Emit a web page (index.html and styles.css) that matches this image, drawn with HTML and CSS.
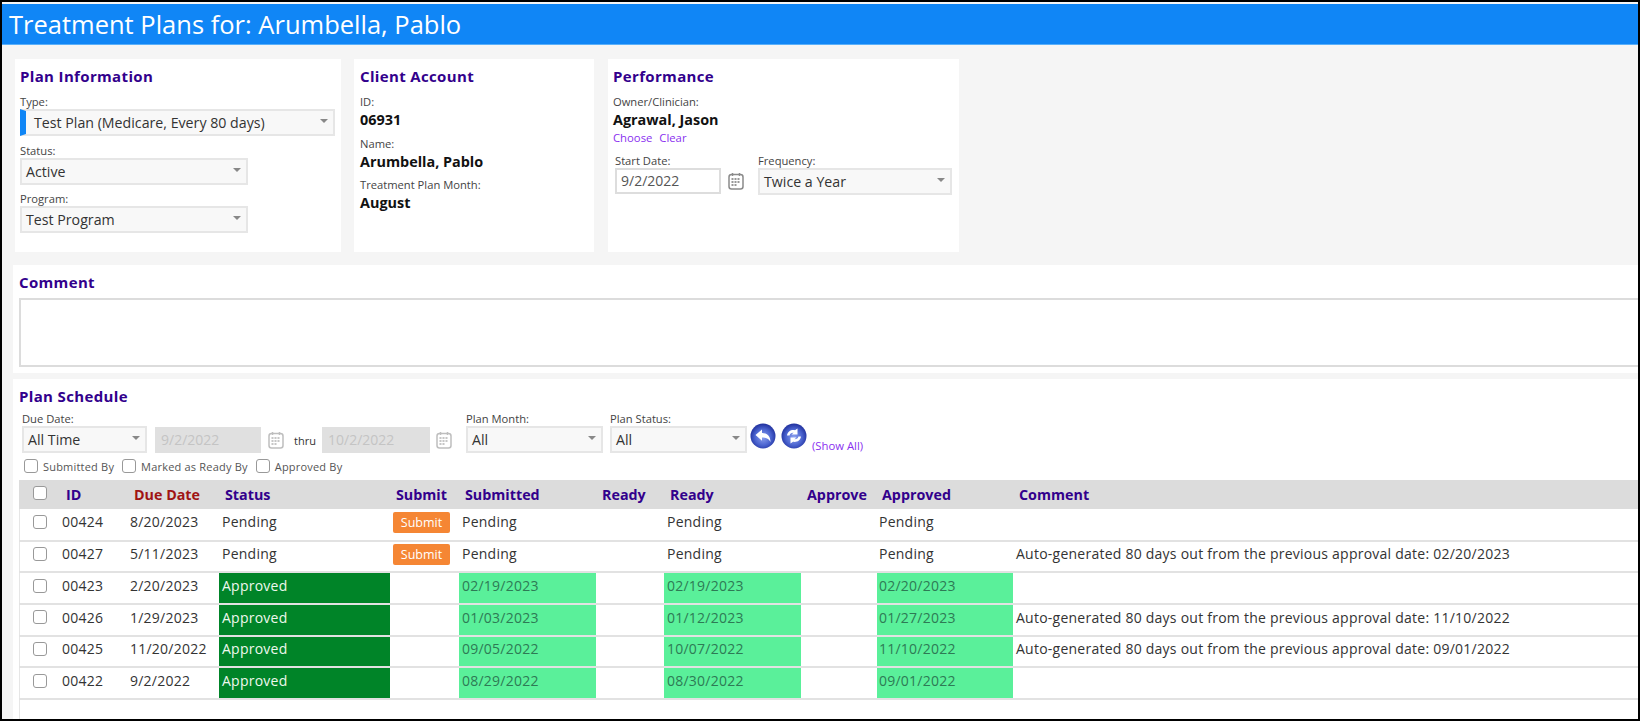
FILE: index.html
```html
<!DOCTYPE html>
<html lang="en">
<head>
  <meta charset="UTF-8">
  <title>Treatment Plans for: Arumbella, Pablo</title>
  <link rel="stylesheet" href="styles.css">
</head>
<body>
  <svg class="icon-defs" width="0" height="0">
    <defs>
      <radialGradient id="ballBlue" cx="50%" cy="55%" r="55%">
        <stop offset="0" stop-color="#8ea2f0"/>
        <stop offset="0.6" stop-color="#4a63cf"/>
        <stop offset="1" stop-color="#1f2f9c"/>
      </radialGradient>
      <symbol id="calendar" viewBox="0 0 16 18">
        <rect x="1" y="2.5" width="14" height="14.5" rx="2.5" fill="#fff" stroke="#8a8a8a" stroke-width="1.5"/>
        <path d="M4.5 1v3M11.5 1v3" stroke="#8a8a8a" stroke-width="1.5"/>
        <path d="M3.5 7h9M3.5 10h9M3.5 13h6" stroke="#777" stroke-width="1.6" stroke-dasharray="2 1"/>
      </symbol>
    </defs>
  </svg>

  <div class="frame">
    <div class="page-header">Treatment Plans for: Arumbella, Pablo</div>

    <div class="cards">
      <div class="card card-plan">
        <h2>Plan Information</h2>
        <label class="lbl">Type:</label>
        <div class="select select-type">Test Plan (Medicare, Every 80 days)</div>
        <label class="lbl lbl-gap">Status:</label>
        <div class="select select-short">Active</div>
        <label class="lbl lbl-gap">Program:</label>
        <div class="select select-short">Test Program</div>
      </div>

      <div class="card card-client">
        <h2>Client Account</h2>
        <div class="field">
          <label class="lbl">ID:</label>
          <div class="value">06931</div>
        </div>
        <div class="field">
          <label class="lbl">Name:</label>
          <div class="value">Arumbella, Pablo</div>
        </div>
        <div class="field">
          <label class="lbl">Treatment Plan Month:</label>
          <div class="value">August</div>
        </div>
      </div>

      <div class="card card-perf">
        <h2>Performance</h2>
        <label class="lbl">Owner/Clinician:</label>
        <div class="value">Agrawal, Jason</div>
        <div class="links"><a href="#">Choose</a> <a href="#">Clear</a></div>
        <div class="perf-row">
          <div class="group">
            <label class="lbl">Start Date:</label>
            <div class="date-wrap">
              <div class="date-input">9/2/2022</div>
              <svg class="cal"><use href="#calendar"/></svg>
            </div>
          </div>
          <div class="group">
            <label class="lbl">Frequency:</label>
            <div class="select select-freq">Twice a Year</div>
          </div>
        </div>
      </div>
    </div>

    <div class="section section-comment">
      <h2>Comment</h2>
      <textarea class="comment-box"></textarea>
    </div>

    <div class="section section-schedule">
      <h2>Plan Schedule</h2>
      <div class="filters">
        <div class="group">
          <label class="lbl">Due Date:</label>
          <div class="select select-due">All Time</div>
        </div>
        <div class="date-input date-off">9/2/2022</div>
        <svg class="cal cal-off"><use href="#calendar"/></svg>
        <span class="thru">thru</span>
        <div class="date-input date-off">10/2/2022</div>
        <svg class="cal cal-off cal-last"><use href="#calendar"/></svg>
        <div class="group group-month">
          <label class="lbl">Plan Month:</label>
          <div class="select select-month">All</div>
        </div>
        <div class="group group-status">
          <label class="lbl">Plan Status:</label>
          <div class="select select-month">All</div>
        </div>
        <svg class="ball ball-back" viewBox="0 0 26 26">
          <circle cx="13" cy="13" r="12.5" fill="url(#ballBlue)"/>
          <path d="M5.5 12 L12 6.5 V10 C17 10 20.5 13 20.5 19 C18.5 15.5 16 14.5 12 14.5 V17.8 Z" fill="#fff"/>
        </svg>
        <svg class="ball" viewBox="0 0 26 26">
          <circle cx="13" cy="13" r="12.5" fill="url(#ballBlue)"/>
          <path d="M6 12.5 C6.5 8.5 10 6.5 14 7.2 L16.5 5.5 V11.5 H10.5 L12.6 9.8 C10.5 9.6 9 10.6 8.6 12.5 Z" fill="#fff"/>
          <path d="M20 13.5 C19.5 17.5 16 19.5 12 18.8 L9.5 20.5 V14.5 H15.5 L13.4 16.2 C15.5 16.4 17 15.4 17.4 13.5 Z" fill="#fff"/>
        </svg>
        <a href="#" class="show-all">(Show All)</a>
      </div>

      <div class="checks">
        <label class="check"><input type="checkbox" class="cb">Submitted By</label>
        <label class="check"><input type="checkbox" class="cb">Marked as Ready By</label>
        <label class="check"><input type="checkbox" class="cb">Approved By</label>
      </div>

      <div class="grid-wrap">
        <table class="grid">
          <colgroup>
            <col class="c-check"><col class="c-id"><col class="c-due"><col class="c-status"><col class="c-submit">
            <col class="c-date"><col class="c-ready"><col class="c-date"><col class="c-approve"><col class="c-approved"><col class="c-comment">
          </colgroup>
          <thead>
            <tr>
              <th><input type="checkbox" class="cb"></th>
              <th>ID</th>
              <th class="sorted">Due Date</th>
              <th>Status</th>
              <th>Submit</th>
              <th>Submitted</th>
              <th>Ready</th>
              <th>Ready</th>
              <th>Approve</th>
              <th>Approved</th>
              <th>Comment</th>
            </tr>
          </thead>
          <tbody>
            <tr>
              <td><input type="checkbox" class="cb"></td>
              <td>00424</td><td>8/20/2023</td><td>Pending</td>
              <td><button class="submit-btn">Submit</button></td>
              <td>Pending</td><td></td><td>Pending</td><td></td><td>Pending</td><td></td>
            </tr>
            <tr>
              <td><input type="checkbox" class="cb"></td>
              <td>00427</td><td>5/11/2023</td><td>Pending</td>
              <td><button class="submit-btn">Submit</button></td>
              <td>Pending</td><td></td><td>Pending</td><td></td><td>Pending</td>
              <td>Auto-generated 80 days out from the previous approval date: 02/20/2023</td>
            </tr>
            <tr>
              <td><input type="checkbox" class="cb"></td>
              <td>00423</td><td>2/20/2023</td><td class="ok">Approved</td><td></td>
              <td class="done">02/19/2023</td><td></td><td class="done">02/19/2023</td><td></td><td class="done">02/20/2023</td><td></td>
            </tr>
            <tr>
              <td><input type="checkbox" class="cb"></td>
              <td>00426</td><td>1/29/2023</td><td class="ok">Approved</td><td></td>
              <td class="done">01/03/2023</td><td></td><td class="done">01/12/2023</td><td></td><td class="done">01/27/2023</td>
              <td>Auto-generated 80 days out from the previous approval date: 11/10/2022</td>
            </tr>
            <tr>
              <td><input type="checkbox" class="cb"></td>
              <td>00425</td><td>11/20/2022</td><td class="ok">Approved</td><td></td>
              <td class="done">09/05/2022</td><td></td><td class="done">10/07/2022</td><td></td><td class="done">11/10/2022</td>
              <td>Auto-generated 80 days out from the previous approval date: 09/01/2022</td>
            </tr>
            <tr>
              <td><input type="checkbox" class="cb"></td>
              <td>00422</td><td>9/2/2022</td><td class="ok">Approved</td><td></td>
              <td class="done">08/29/2022</td><td></td><td class="done">08/30/2022</td><td></td><td class="done">09/01/2022</td><td></td>
            </tr>
          </tbody>
        </table>
      </div>
    </div>
  </div>
</body>
</html>
```

FILE: styles.css
```css
* {
  box-sizing: border-box;
}

html, body {
  margin: 0;
  padding: 0;
  height: 100%;
  overflow: hidden;
}

body {
  font-family: "Open Sans", "Noto Sans", Arial, sans-serif;
  font-size: 13px;
  color: #333;
  background-color: #000;
}

.icon-defs {
  position: absolute;
}

.frame {
  display: flex;
  flex-direction: column;
  width: 1640px;
  height: 721px;
  border: 2px solid #000;
  background-color: #f5f5f5;
  overflow: hidden;
}

.page-header {
  flex: none;
  height: 43px;
  padding-left: 7px;
  border-top: 2px solid #f5f5f5;
  border-bottom: 1px solid #5ab0fa;
  background-color: #1086f6;
  color: #fff;
  font-size: 25.5px;
  line-height: 40px;
}

h2 {
  margin: 0;
  font-size: 15px;
  font-weight: 700;
  letter-spacing: 0.35px;
  line-height: 20px;
  color: #32008c;
}

.cards {
  flex: none;
  display: flex;
  height: 193px;
  margin: 14px 0 0 13px;
}

.card {
  background-color: #fff;
  padding: 7px 5px 0;
}

.card h2 {
  margin-bottom: 9px;
}

.card-plan {
  width: 326px;
}

.card-client {
  width: 240px;
  margin-left: 13px;
  padding-left: 6px;
}

.card-perf {
  width: 351px;
  margin-left: 14px;
}

.lbl {
  display: block;
  height: 14px;
  font-size: 11.2px;
  line-height: 14px;
  color: #444;
}

.lbl-gap {
  margin-top: 7.5px;
}

.value {
  height: 22px;
  font-size: 14.4px;
  font-weight: 700;
  line-height: 22px;
  color: #111;
}

.field {
  margin-bottom: 5.5px;
}

.links {
  height: 14px;
  font-size: 11.3px;
  line-height: 14px;
}

.links a,
.show-all {
  color: #8a2ff0;
  text-decoration: none;
}

.links a + a {
  margin-left: 4px;
}

.select {
  position: relative;
  height: 27px;
  padding-left: 4px;
  border: 2px solid #e6e6e6;
  background-color: #f8f8f8;
  font-size: 14.2px;
  line-height: 24px;
  color: #333;
}

.select::after {
  content: "";
  position: absolute;
  right: 5px;
  top: 8px;
  border-left: 4px solid transparent;
  border-right: 4px solid transparent;
  border-top: 4px solid #888;
}

.select-type {
  width: 315px;
  padding-left: 8px;
  border-left: 6px solid #1086f6;
}

.select-short {
  width: 228px;
}

.select-freq {
  width: 194px;
}

.select-due {
  width: 125px;
}

.select-month {
  width: 137px;
}

.perf-row {
  display: flex;
  margin: 9px 0 0 2px;
}

.date-wrap {
  display: flex;
  align-items: center;
}

.date-input {
  width: 106px;
  height: 26px;
  padding-left: 4px;
  border: 2px solid #ddd;
  background-color: #fff;
  font-size: 14px;
  line-height: 22px;
  color: #555;
}

.date-off {
  margin-left: 8px;
  border-color: #e0e0e0;
  background-color: #e0e0e0;
  color: #c4c4c4;
}

.date-off + .cal + .thru + .date-off {
  margin-left: 0;
  width: 108px;
}

.cal {
  flex: none;
  width: 16px;
  height: 18px;
  margin-left: 7px;
}

.cal-off {
  margin: 0 0 4px 7px;
  opacity: 0.55;
}

.cal-last {
  margin-left: 6px;
}

.group:nth-child(2) {
  margin-left: 14px;
}

.section {
  flex: none;
  margin: 13px 0 0 11px;
  background-color: #fff;
  overflow: hidden;
}

.section-comment {
  height: 108px;
  padding: 7px 0 0 6px;
}

.comment-box {
  display: block;
  width: 1640px;
  height: 69px;
  margin-top: 6px;
  border: 2px solid #dcdcdc;
  background-color: #fff;
  resize: none;
}

.section-schedule {
  flex: 1;
  margin-top: 6px;
  padding: 7px 0 0 6px;
}

.filters {
  display: flex;
  align-items: flex-end;
  height: 41px;
  margin: 6px 0 0 3px;
}

.thru {
  width: 38px;
  padding-left: 10px;
  font-size: 11px;
  line-height: 24px;
}

.filters .group {
  margin-left: 0;
}

.filters .group-month {
  margin-left: 14px;
}

.filters .group-status {
  margin-left: 7px;
}

.ball {
  flex: none;
  width: 26px;
  height: 26px;
  margin: 0 0 4px 5px;
}

.ball-back {
  margin-left: 3px;
}

.show-all {
  margin-left: 5px;
  font-size: 11.3px;
  line-height: 14px;
}

.checks {
  display: flex;
  height: 14px;
  margin: 6px 0 0 5px;
}

.check {
  display: flex;
  align-items: center;
  margin-right: 8px;
  font-size: 11px;
  letter-spacing: 0.2px;
  color: #555;
}

.cb {
  flex: none;
  appearance: none;
  width: 14px;
  height: 14px;
  margin: 0;
  border: 1.5px solid #999;
  border-radius: 3px;
  background-color: #fff;
}

.check .cb {
  margin-right: 5px;
}

.grid-wrap {
  height: 240px;
  margin-top: 7px;
  border-left: 1px solid #e6e6e6;
}

.grid {
  width: 1619px;
  margin-left: -1px;
  table-layout: fixed;
  border-collapse: collapse;
}

.c-check { width: 41px; }
.c-id { width: 68px; }
.c-due { width: 91px; }
.c-status { width: 171px; }
.c-submit { width: 69px; }
.c-date { width: 137px; }
.c-ready { width: 68px; }
.c-approve { width: 76px; }
.c-approved { width: 136px; }

.grid th {
  height: 29px;
  padding: 0 0 0 6px;
  background-color: #dcdcdc;
  font-size: 14.3px;
  font-weight: 700;
  text-align: left;
  color: #32008c;
}

.grid th.sorted {
  color: #a01414;
}

.grid th:nth-child(10) {
  padding-left: 5px;
}

.grid th:first-child,
.grid td:first-child {
  padding-left: 14px;
}

.grid td {
  height: 31.67px;
  padding: 0 0 5px 3px;
  border-bottom: 2px solid #e2e2e2;
  font-size: 14px;
  letter-spacing: 0.24px;
  white-space: nowrap;
  color: #333;
}

.grid td:nth-child(2),
.grid td:nth-child(3),
.grid td:nth-child(10) {
  padding-left: 2px;
}

.grid td .cb {
  display: block;
}

.grid td.ok {
  background-color: #008428;
  color: #eef8ee;
}

.grid td.done {
  background-color: #5af09a;
  color: #2e7a55;
}

.submit-btn {
  display: block;
  width: 57px;
  height: 21px;
  margin-top: 1px;
  padding: 0;
  border: none;
  border-radius: 2px;
  background-color: #f58634;
  color: #fff;
  font-family: inherit;
  font-size: 12.5px;
  line-height: 21px;
}
```
